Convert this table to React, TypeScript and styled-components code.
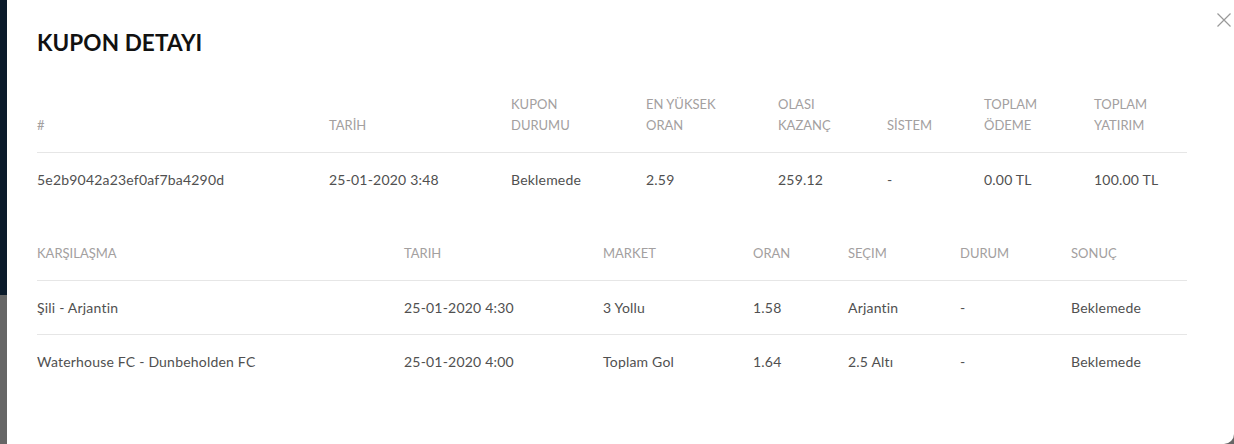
import React from "react";
import styled, { createGlobalStyle } from "styled-components";

const Global = createGlobalStyle`
  html, body { margin: 0; padding: 0; height: 100%; }
  body { font-family: Lato, "Noto Sans", sans-serif; background: #666; }
  #root { height: 100%; }
`;

const Page = styled.div`
  display: flex;
  width: 1234px;
  height: 444px;
  background: #666;
  overflow: hidden;
`;

const Strip = styled.div`
  width: 7px;
  flex: none;
  display: flex;
  flex-direction: column;
`;

const StripTop = styled.div`
  height: 295px;
  background: #0b1b2b;
`;

const StripBottom = styled.div`
  flex: 1;
  background: #666;
`;

const Modal = styled.div`
  position: relative;
  flex: 1;
  background: #fff;
  border-bottom-right-radius: 10px;
  padding: 28px 47px 0 30px;
`;

const Close = styled.button`
  position: absolute;
  top: 12px;
  right: 2px;
  width: 16px;
  height: 16px;
  padding: 0;
  border: 0;
  background: transparent;
  cursor: pointer;
  display: flex;
`;

const Title = styled.h2`
  margin: 0 0 20px;
  font-size: 22.5px;
  line-height: 30px;
  font-weight: 700;
  color: #111;
  letter-spacing: 0.1px;
`;

const Grid = styled.div<{ $cols: string; $gap?: number }>`
  display: grid;
  grid-template-columns: ${(p) => p.$cols};
  margin-top: ${(p) => p.$gap ?? 0}px;
  font-size: 14px;
  line-height: 21px;
`;

const Head = styled.div`
  display: flex;
  flex-direction: column;
  justify-content: flex-end;
  padding: 16px 0;
  border-bottom: 1px solid #e6e6e6;
  color: #a3a0a0;
  font-size: 13px;
`;

const Cell = styled.div<{ $last?: boolean }>`
  padding: 16px 0;
  color: #505050;
  letter-spacing: 0.2px;
  border-bottom: ${(p) => (p.$last ? "none" : "1px solid #e6e6e6")};
`;

const couponHead = [
  ["#"],
  ["TARİH"],
  ["KUPON", "DURUMU"],
  ["EN YÜKSEK", "ORAN"],
  ["OLASI", "KAZANÇ"],
  ["SİSTEM"],
  ["TOPLAM", "ÖDEME"],
  ["TOPLAM", "YATIRIM"],
];

const couponRow = [
  "5e2b9042a23ef0af7ba4290d",
  "25-01-2020 3:48",
  "Beklemede",
  "2.59",
  "259.12",
  "-",
  "0.00 TL",
  "100.00 TL",
];

const matchHead = ["KARŞILAŞMA", "TARIH", "MARKET", "ORAN", "SEÇIM", "DURUM", "SONUÇ"];

const matchRows = [
  ["Şili - Arjantin", "25-01-2020 4:30", "3 Yollu", "1.58", "Arjantin", "-", "Beklemede"],
  ["Waterhouse FC - Dunbeholden FC", "25-01-2020 4:00", "Toplam Gol", "1.64", "2.5 Altı", "-", "Beklemede"],
];

export default function App() {
  return (
    <>
      <Global />
      <Page>
        <Strip>
          <StripTop />
          <StripBottom />
        </Strip>
        <Modal>
          <Close aria-label="Kapat">
            <svg width="16" height="16" viewBox="0 0 16 16">
              <path d="M1.5 1.5 L14.5 14.5 M14.5 1.5 L1.5 14.5" stroke="#999" strokeWidth="1.2" fill="none" />
            </svg>
          </Close>
          <Title>KUPON DETAYI</Title>
          <Grid $cols="292px 182px 135px 132px 109px 97px 110px 93px">
            {couponHead.map((lines, i) => (
              <Head key={i}>
                {lines.map((l) => (
                  <span key={l}>{l}</span>
                ))}
              </Head>
            ))}
            {couponRow.map((v, i) => (
              <Cell key={i} $last>
                {v}
              </Cell>
            ))}
          </Grid>
          <Grid $cols="367px 199px 150px 95px 112px 111px 116px" $gap={21}>
            {matchHead.map((h) => (
              <Head key={h}>{h}</Head>
            ))}
            {matchRows.map((row, r) =>
              row.map((v, i) => (
                <Cell key={`${r}-${i}`} $last={r === matchRows.length - 1}>
                  {v}
                </Cell>
              ))
            )}
          </Grid>
        </Modal>
      </Page>
    </>
  );
}
